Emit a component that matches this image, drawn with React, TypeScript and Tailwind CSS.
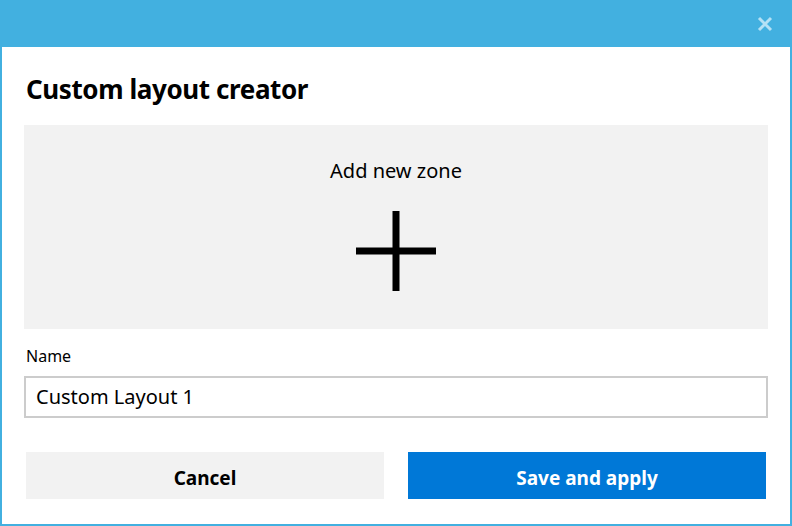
export default function App() {
  return (
    <div
      className="w-[792px] h-[526px] flex flex-col bg-white border-2 border-t-0 border-[#42b0e0] text-black"
      style={{ fontFamily: '"Noto Sans", "Open Sans", sans-serif' }}
    >
      {/* title bar */}
      <div className="h-[47px] shrink-0 bg-[#42b0e0] -mx-[2px] flex items-center justify-end pr-[19px]">
        <svg width="16" height="16" viewBox="0 0 16 16" className="text-[#b5e1f5]">
          <path d="M2 2L14 14M14 2L2 14" stroke="currentColor" strokeWidth="3" />
        </svg>
      </div>

      <div className="flex flex-col px-[22px] pt-[25px]">
        <h1 className="text-[26px] leading-[34px] font-bold pl-[2px] tracking-[-0.4px]">
          Custom layout creator
        </h1>

        <button className="mt-[19px] h-[204px] bg-[#f2f2f2] flex flex-col items-center">
          <span className="mt-[32px] text-[20px] leading-[28px]">Add new zone</span>
          <svg width="80" height="80" viewBox="0 0 80 80" className="mt-[26px]">
            <path d="M40 0V80M0 40H80" stroke="black" strokeWidth="7" />
          </svg>
        </button>

        <label className="mt-[16px] pl-[2px] text-[16px] leading-[22px]">Name</label>
        <div className="mt-[9px] h-[42px] border-2 border-[#cccccc] flex items-center px-[10px]">
          <span className="text-[20px]">Custom Layout 1</span>
        </div>

        <div className="mt-[34px] flex gap-[24px] px-[2px]">
          <button className="flex-1 h-[47px] pt-[5px] bg-[#f2f2f2] text-[19px] font-bold">Cancel</button>
          <button className="flex-1 h-[47px] pt-[5px] bg-[#0078d7] text-white text-[19px] font-bold">
            Save and apply
          </button>
        </div>
      </div>
    </div>
  );
}
